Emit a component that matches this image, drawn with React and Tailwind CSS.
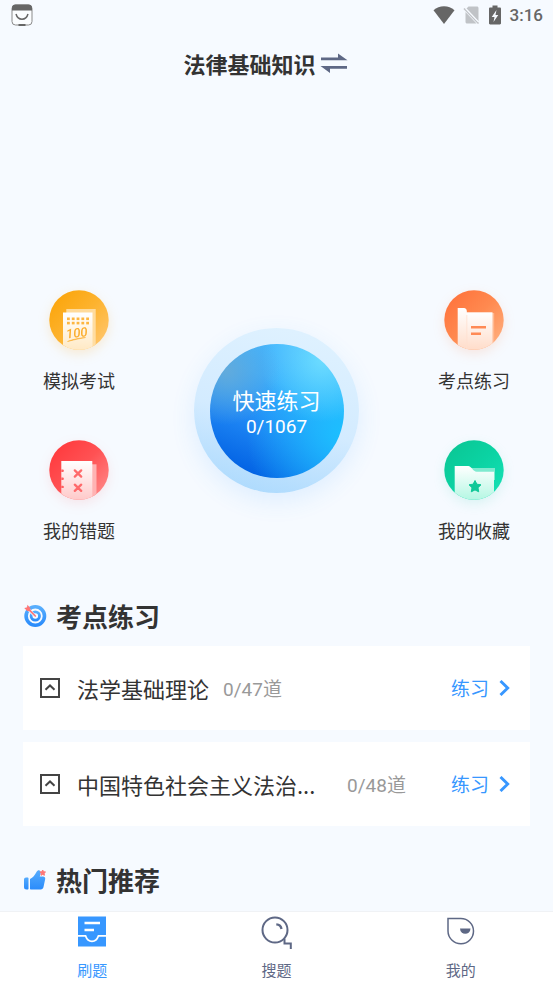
import React, { useState } from 'react';

const chapters = [
  { id: 1, title: '法学基础理论', done: 0, total: 47 },
  { id: 2, title: '中国特色社会主义法治...', done: 0, total: 48, isLong: true },
];

export default function App() {
  const [activeTab, setActiveTab] = useState('practice');

  return (
    <div className="min-h-screen flex flex-col bg-[#f6faff] text-[#333333] font-['Noto_Sans_CJK_SC',sans-serif]">
      <StatusBar />

      <header className="h-[66px] pr-[22px] flex items-center justify-center gap-1">
        <h1 className="text-[22px] leading-8 font-bold">法律基础知识</h1>
        <button aria-label="切换科目">
          <SwapIcon />
        </button>
      </header>

      <main className="flex-1 px-[23px] pt-[194px] pb-3">
        <div className="flex justify-between items-start">
          <div className="w-28 flex flex-col gap-[46px]">
            <Shortcut label="模拟考试" icon={<ExamIcon />} />
            <Shortcut label="我的错题" icon={<MistakeIcon />} />
          </div>

          <QuickPractice done={0} total={1067} />

          <div className="w-28 flex flex-col gap-[46px]">
            <Shortcut label="考点练习" icon={<TopicIcon />} />
            <Shortcut label="我的收藏" icon={<FavoriteIcon />} />
          </div>
        </div>

        <section className="mt-[54px]">
          <SectionTitle icon={<TargetIcon />}>考点练习</SectionTitle>
          <ul className="mt-3 flex flex-col gap-3">
            {chapters.map((chapter) => (
              <ChapterRow key={chapter.id} chapter={chapter} />
            ))}
          </ul>
        </section>

        <section className="mt-9">
          <SectionTitle icon={<ThumbIcon />}>热门推荐</SectionTitle>
        </section>
      </main>

      {/* Bottom tab bar */}
      <nav className="sticky bottom-0 grid grid-cols-3 bg-white border-t border-[#f0f2f5] pt-1 pb-[3px]">
        <Tab label="刷题" icon={<PracticeTabIcon />} active={activeTab === 'practice'} onClick={() => setActiveTab('practice')} />
        <Tab label="搜题" icon={<SearchTabIcon />} active={activeTab === 'search'} onClick={() => setActiveTab('search')} />
        <Tab label="我的" icon={<MineTabIcon />} active={activeTab === 'mine'} onClick={() => setActiveTab('mine')} />
      </nav>
    </div>
  );
}

function StatusBar() {
  return (
    <div className="h-[30px] pl-[11px] pr-[10px] flex items-center justify-between text-[#666666]">
      <svg width="22" height="22" viewBox="0 0 22 22" fill="none">
        <rect x="1" y="1" width="20" height="20" rx="3.500" fill="#fbfdff" stroke="#8a8a8a" />
        <path d="M1 6.500V4a3.500 3.500 0 0 1 3.500-3.500h13A3.500 3.500 0 0 1 21 4v2.500z" fill="#666666" />
        <path d="M5 10c1 3.500 3.300 5.200 6 5.200s5-1.700 6-5.200" stroke="#666666" strokeWidth="1.500" />
        <path d="M7.500 21h7" stroke="#666666" strokeWidth="2" />
      </svg>
      <div className="flex items-center gap-2">
        <svg width="22" height="18" viewBox="0 0 22 18" fill="currentColor">
          <path d="M11 18 0.500 4.200C3.500 1.700 7 0.300 11 0.300s7.500 1.400 10.500 3.900z" />
        </svg>
        <svg width="17" height="18" viewBox="0 0 17 18">
          <path d="M5.500 0.500H14c.800 0 1.500.700 1.500 1.500v13.500L3.500 2.500z" fill="#c0c3c7" />
          <path d="M2.500 6 13.500 17.500H4c-.800 0-1.500-.700-1.500-1.500z" fill="#c0c3c7" />
          <path d="m1 2.500 14.500 15" stroke="#c0c3c7" strokeWidth="1.500" />
          <path d="m3 2.800 12.500 13" stroke="#f6faff" strokeWidth="1.200" />
        </svg>
        <svg width="14" height="20" viewBox="0 0 14 20">
          <path d="M4.500 0.500h5v2h2.300c.700 0 1.200.500 1.200 1.200v14.600c0 .700-.500 1.200-1.200 1.200H2.200c-.700 0-1.200-.500-1.200-1.200V3.700c0-.700.500-1.200 1.200-1.200h2.300z" fill="#666666" />
          <path d="M8.500 5 3.700 12h2.800L5.500 17 10.300 10H7.500z" fill="#f6faff" />
        </svg>
        <span className="font-[Roboto,sans-serif] text-[17px] leading-6 font-medium">3:16</span>
      </div>
    </div>
  );
}

function Shortcut({ label, icon }) {
  return (
    <button className="flex flex-col items-center gap-4">
      {icon}
      <span className="text-[18px] leading-7">{label}</span>
    </button>
  );
}

function QuickPractice({ done, total }) {
  return (
    <div className="mt-[38px] size-[165px] shrink-0 rounded-full flex items-center justify-center bg-[linear-gradient(195deg,#def1ff_10%,#d3ebff_55%,#a6d7fd_100%)] shadow-[0_8px_24px_rgba(60,160,255,0.12)]">
      <button className="size-[134px] rounded-full flex flex-col items-center justify-center text-white bg-[radial-gradient(circle_at_12%_20%,#62abdc_0%,rgba(98,171,220,0)_34%),radial-gradient(circle_at_84%_12%,#6cdcff_0%,rgba(108,220,255,0)_38%),radial-gradient(circle_at_100%_68%,#1cc0ff_0%,rgba(28,192,255,0)_60%),linear-gradient(22deg,#005fe2_8%,#1e86f4_38%,#3aacfd_66%,#4bbcff_100%)]">
        <span className="text-[22px] leading-7">快速练习</span>
        <span className="text-[19px] leading-6">
          <span className="font-[Roboto,sans-serif] leading-none">{done}/{total}</span>
        </span>
      </button>
    </div>
  );
}

function SectionTitle({ icon, children }) {
  return (
    <div className="flex items-center gap-[9px]">
      {icon}
      <h2 className="text-[26px] leading-9 font-bold">{children}</h2>
    </div>
  );
}

function ChapterRow({ chapter }) {
  return (
    <li className="h-[84px] pl-4 pr-5 flex items-center bg-white">
      <button aria-label="展开章节" className="mr-4">
        <svg width="22" height="22" viewBox="0 0 22 22" fill="none" stroke="#444444" strokeWidth="2">
          <rect x="2" y="2" width="18" height="18" />
          <path d="m6.500 12.800 4.500-4.300 4.500 4.300" />
        </svg>
      </button>
      <h3 className={`text-[22px] leading-8 ${chapter.isLong ? 'w-64' : ''}`}>{chapter.title}</h3>
      <span className="ml-[14px] text-[19px] leading-8 text-[#999999]">
        <span className="font-[Roboto,sans-serif] leading-none">{chapter.done}/{chapter.total}</span>道
      </span>
      <a href="#practice" className="ml-auto flex items-center gap-[10px] text-[19px] leading-8 text-[#3797ff]">
        练习
        <svg width="11" height="16" viewBox="0 0 11 16" fill="none" stroke="currentColor" strokeWidth="2.900">
          <path d="m1.500 1 7.200 7-7.200 7" />
        </svg>
      </a>
    </li>
  );
}

function Tab({ label, icon, active, onClick }) {
  return (
    <button onClick={onClick} className={`flex flex-col items-center gap-[10px] ${active ? 'text-[#3797ff]' : 'text-[#5e6885]'}`}>
      {icon}
      <span className="text-[15px] leading-5">{label}</span>
    </button>
  );
}

/* Icons */

function SwapIcon() {
  return (
    <svg width="28" height="24" viewBox="0 0 28 24" fill="#5e6885">
      <path d="M1 6.500h17V2.500L27.500 9.200H1z" />
      <path d="M27 15v2.700H10v4.300L.500 15z" />
    </svg>
  );
}

function ExamIcon() {
  return (
    <svg width="60" height="60" viewBox="0 0 60 60" className="drop-shadow-[0_4px_6px_rgba(255,175,40,0.2)]">
      <defs>
        <linearGradient id="exam-bg" x1="0.100" y1="0.100" x2="0.900" y2="0.900">
          <stop offset="0" stopColor="#fba50b" />
          <stop offset="0.500" stopColor="#fdb32f" />
          <stop offset="1" stopColor="#ffc56a" />
        </linearGradient>
        <linearGradient id="exam-page" x1="0" y1="0" x2="0" y2="1">
          <stop offset="0" stopColor="#ffffff" />
          <stop offset="1" stopColor="#ffe9c4" />
        </linearGradient>
        <clipPath id="exam-clip"><circle cx="30" cy="30" r="29.700" /></clipPath>
      </defs>
      <g clipPath="url(#exam-clip)">
        <rect width="60" height="60" fill="url(#exam-bg)" />
        <rect x="17.300" y="19" width="29.400" height="41" fill="#ffe2ae" opacity="0.850" />
        <rect x="14" y="22.500" width="29.500" height="38" fill="url(#exam-page)" />
        <g fill="#fdb640">
          {[18, 22.8, 27.6, 32.4, 37.2].map((x) => (
            <React.Fragment key={x}>
              <rect x={x} y="27.500" width="2.800" height="2.600" />
              <rect x={x} y="31.800" width="2.800" height="2.600" />
            </React.Fragment>
          ))}
        </g>
        <text x="17.500" y="48.500" transform="rotate(-6 18 48)" fontSize="13" fontStyle="italic" fontWeight="500" fill="#fbad2c" fontFamily="Roboto, sans-serif">100</text>
        <path d="M18.500 51.500c5-2.200 11-3.400 18-4-6 1.200-12 2.300-18 4z" fill="#fbad2c" stroke="#fbad2c" strokeWidth="0.500" />
      </g>
    </svg>
  );
}

function MistakeIcon() {
  return (
    <svg width="60" height="60" viewBox="0 0 60 60" className="drop-shadow-[0_4px_6px_rgba(255,80,80,0.12)]">
      <defs>
        <linearGradient id="mistake-bg" x1="0.100" y1="0.100" x2="0.900" y2="0.900">
          <stop offset="0" stopColor="#ff3a3d" />
          <stop offset="0.500" stopColor="#ff5254" />
          <stop offset="1" stopColor="#ff8585" />
        </linearGradient>
        <linearGradient id="mistake-page" x1="0" y1="0" x2="0" y2="1">
          <stop offset="0" stopColor="#ffffff" />
          <stop offset="1" stopColor="#ffc9c9" />
        </linearGradient>
        <clipPath id="mistake-clip"><circle cx="30" cy="30" r="29.700" /></clipPath>
      </defs>
      <g clipPath="url(#mistake-clip)">
        <rect width="60" height="60" fill="url(#mistake-bg)" />
        <rect x="43" y="24.300" width="4.500" height="36" fill="#ffb3b3" />
        <rect x="12.300" y="21" width="31" height="39" fill="url(#mistake-page)" />
        <g fill="#ff5f61">
          <path d="M12.300 29.500h1.400a1.200 1.200 0 0 1 0 2.400h-1.400zM12.300 37.500h1.400a1.200 1.200 0 0 1 0 2.400h-1.400zM12.300 45.700h1.400a1.200 1.200 0 0 1 0 2.400h-1.400z" />
        </g>
        <g stroke="#ff6a6b" strokeWidth="2.300" strokeLinecap="round">
          <path d="m25.800 30.400 6.400 6.200m0-6.200-6.400 6.200" />
          <path d="m25.800 44.700 6.400 6.200m0-6.200-6.400 6.200" />
        </g>
      </g>
    </svg>
  );
}

function TopicIcon() {
  return (
    <svg width="60" height="60" viewBox="0 0 60 60" className="drop-shadow-[0_4px_6px_rgba(255,130,70,0.16)]">
      <defs>
        <linearGradient id="topic-bg" x1="0.100" y1="0.100" x2="0.900" y2="0.900">
          <stop offset="0" stopColor="#ff733c" />
          <stop offset="0.500" stopColor="#ff8a50" />
          <stop offset="1" stopColor="#ffad7c" />
        </linearGradient>
        <linearGradient id="topic-page" x1="0" y1="0" x2="0" y2="1">
          <stop offset="0" stopColor="#ffffff" />
          <stop offset="1" stopColor="#ffdcc9" />
        </linearGradient>
        <clipPath id="topic-clip"><circle cx="30" cy="30" r="29.700" /></clipPath>
      </defs>
      <g clipPath="url(#topic-clip)">
        <rect width="60" height="60" fill="url(#topic-bg)" />
        <rect x="48" y="23" width="2.200" height="37" fill="#ffb890" />
        <rect x="22" y="22.300" width="26.500" height="38" fill="url(#topic-page)" />
        <path d="M13.700 18h6.300c1.700 0 2.800 1.400 2.800 3.500V60h-9.100z" fill="url(#topic-page)" />
        <path d="M22.800 25v35" stroke="#ffe0cf" strokeWidth="0.800" />
        <path d="M27 37.300h15M27 43.700h10" stroke="#ff8a55" strokeWidth="2.500" />
      </g>
    </svg>
  );
}

function FavoriteIcon() {
  return (
    <svg width="60" height="60" viewBox="0 0 60 60" className="drop-shadow-[0_4px_6px_rgba(20,200,160,0.12)]">
      <defs>
        <linearGradient id="favorite-bg" x1="0.100" y1="0.100" x2="0.900" y2="0.900">
          <stop offset="0" stopColor="#0bc795" />
          <stop offset="0.500" stopColor="#0bd3a3" />
          <stop offset="1" stopColor="#14e0b4" />
        </linearGradient>
        <linearGradient id="favorite-page" x1="0" y1="0" x2="0" y2="1">
          <stop offset="0" stopColor="#ffffff" />
          <stop offset="1" stopColor="#b4f7e3" />
        </linearGradient>
        <clipPath id="favorite-clip"><circle cx="30" cy="30" r="29.700" /></clipPath>
      </defs>
      <g clipPath="url(#favorite-clip)">
        <rect width="60" height="60" fill="url(#favorite-bg)" />
        <path d="M26 28h25v12H30z" fill="#7eeacf" />
        <path d="M10.700 26h13.600c3 0 4.700 5.700 8.400 5.700H50V60H10.700z" fill="url(#favorite-page)" />
        <path d="m31 40.500 1.900 3.700 4.100.600-3 2.900.700 4.100-3.700-1.900-3.700 1.900.700-4.100-3-2.900 4.100-.600z" fill="#10c898" stroke="#10c898" strokeLinejoin="round" />
      </g>
    </svg>
  );
}

function TargetIcon() {
  return (
    <svg width="24" height="24" viewBox="0 0 24 24" fill="none">
      <defs>
        <linearGradient id="target-ring" x1="0" y1="0" x2="0" y2="1">
          <stop offset="0" stopColor="#58aefd" />
          <stop offset="1" stopColor="#2b8cfb" />
        </linearGradient>
      </defs>
      <circle cx="12.300" cy="12" r="9.200" stroke="url(#target-ring)" strokeWidth="3.600" />
      <circle cx="12.300" cy="12" r="4.200" stroke="url(#target-ring)" strokeWidth="2.800" />
      <path d="M3 3 11.500 11.500" stroke="#e4f1ff" strokeWidth="3" />
      <path d="m4.500 4.200 7.800 7.800" stroke="#ff7676" strokeWidth="1.700" strokeLinecap="round" />
      <path d="M1.200 3.900 4 3.400 4.400.700 7.300 3.900l.200 3.300-3.300-.200z" fill="#ff7676" />
    </svg>
  );
}

function ThumbIcon() {
  return (
    <svg width="24" height="24" viewBox="0 0 24 24">
      <defs>
        <linearGradient id="thumb-fill" x1="0" y1="0" x2="0" y2="1">
          <stop offset="0" stopColor="#55abfd" />
          <stop offset="1" stopColor="#2b8cfb" />
        </linearGradient>
      </defs>
      <path d="M3 9.500h1.500c.600 0 1 .400 1 1v10c0 .600-.400 1-1 1H3.500A2.500 2.500 0 0 1 1 19v-7.500a2 2 0 0 1 2-2z" fill="url(#thumb-fill)" />
      <path d="M7 11c3-1.300 4.700-3.700 6.500-7 .900-1.600 2.300-2 3.300-1.300 1.200.800 1.200 2.300.600 3.800L16.800 8.500H20c1.500 0 2.500 1.200 2.200 2.600l-1.700 8c-.300 1.500-1.300 2.400-2.800 2.400H8c-.600 0-1-.400-1-1z" fill="url(#thumb-fill)" />
      <path d="m19.700 2 .900 1.700 1.900.300-1.400 1.400.300 1.900-1.700-.900-1.700.900.300-1.900-1.400-1.400 1.900-.300z" fill="#ff7676" stroke="#ff7676" strokeLinejoin="round" />
    </svg>
  );
}

function PracticeTabIcon() {
  return (
    <svg width="32" height="34" viewBox="0 0 32 34" fill="none">
      <rect x="2" y="0.500" width="28" height="30" fill="currentColor" />
      <path d="M8.500 7h15.500M8.500 14h9.500" stroke="white" strokeWidth="2.300" />
      <path d="M2 19.800h7.500c1.300 3.700 3.700 5.600 6.500 5.600s5.200-1.900 6.500-5.600H30" stroke="white" strokeWidth="1.800" />
    </svg>
  );
}

function SearchTabIcon() {
  return (
    <svg width="32" height="34" viewBox="0 0 32 34" fill="none" stroke="currentColor">
      <circle cx="15" cy="14" r="12.500" strokeWidth="2" />
      <path d="M16.300 8.300c3 .200 4.800 1.800 5.200 4.700" strokeWidth="2.300" />
      <path d="M24.500 22.500v5h6.300v5.500" strokeWidth="2" />
    </svg>
  );
}

function MineTabIcon() {
  return (
    <svg width="32" height="34" viewBox="0 0 32 34" fill="none" stroke="currentColor">
      <path d="M3 2.500h12.800c7.200 0 12.700 5.600 12.700 12.500 0 7-5.500 12.800-12.500 12.800C8.800 27.800 3 22 3 15z" strokeWidth="1.500" />
      <path d="M15 12.500h10.500a5.200 5.200 0 0 1-10.500 0z" fill="currentColor" stroke="none" />
    </svg>
  );
}
